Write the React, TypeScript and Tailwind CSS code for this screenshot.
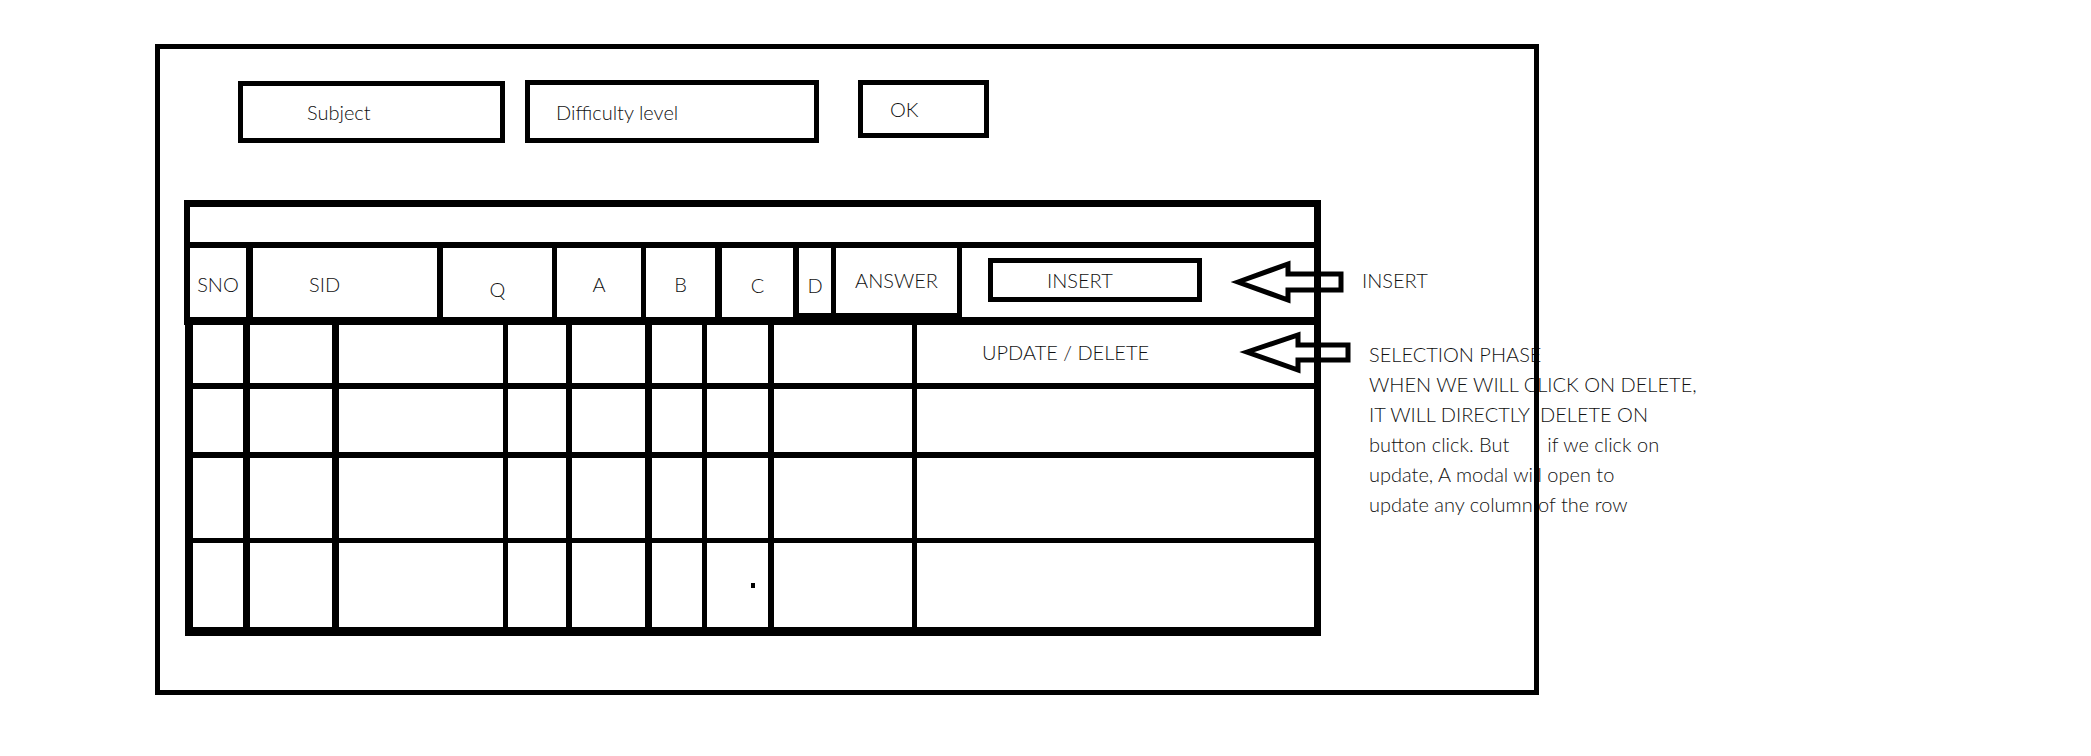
const FONT = "font-['Lato','Open_Sans',sans-serif] font-light text-[20px] leading-[24px] text-[#111]";

// header row with column labels (widths include the right-hand line)
const headCols = [
  { label: "SNO", cls: "w-[63px] border-r-[7px] justify-center pt-[24px]" },
  { label: "SID", cls: "w-[190px] border-r-[6px] justify-start pl-[56px] pt-[24px]" },
  { label: "Q", cls: "w-[114px] border-r-[5px] justify-center pt-[29px]" },
  { label: "A", cls: "w-[89px] border-r-[5px] justify-center pt-[24px]" },
  { label: "B", cls: "w-[76px] border-r-[7px] justify-center pt-[24px]" },
  { label: "C", cls: "w-[77px] border-r-[6px] justify-center pt-[25px]" },
  { label: "D", cls: "w-[37px] border-r-[5px] border-b-[4px] justify-center pt-[25px]" },
  { label: "ANSWER", cls: "w-[126px] border-r-[5px] border-b-[4px] justify-center pt-[20px]" },
];

const bodyCols = [
  "w-[57px] border-r-[7px]",
  "w-[89px] border-r-[7px]",
  "w-[169px] border-r-[5px]",
  "w-[64px] border-r-[6px]",
  "w-[80px] border-r-[7px]",
  "w-[55px] border-r-[5px]",
  "w-[67px] border-r-[6px]",
  "w-[143px] border-r-[5px]",
];

const bodyRows = [
  "h-[64px] border-b-[6px]",
  "h-[69px] border-b-[6px]",
  "h-[85px] border-b-[5px]",
  "h-[84px]",
];

const notes = [
  "SELECTION PHASE",
  "WHEN WE WILL CLICK ON DELETE,",
  "IT WILL DIRECTLY  DELETE ON",
  "button click. But       if we click on",
  "update, A modal will open to",
  "update any column of the row",
];

function Arrows() {
  return (
    <svg
      className="pointer-events-none absolute left-[1070px] top-[206px] z-20"
      width="125"
      height="125"
      viewBox="0 0 125 125"
      fill="none"
      stroke="black"
      strokeWidth="5"
      strokeLinejoin="miter"
    >
      <polygon points="8,27 58,9 58,19 111,19 111,35 58,35 58,45" />
      <polygon points="17,97 68,80 68,90 118,90 118,105 68,105 68,115" />
    </svg>
  );
}

function QuestionTable() {
  return (
    <div className="flex w-[1137px] shrink-0 flex-col">
      <div className="border-x-[6px] border-t-[7px] border-b-[8px] border-black border-r-[7px]">
        <div className="h-[41px] border-b-[6px] border-black" />
        <div className="flex h-[69px]">
          {headCols.map((c) => (
            <div key={c.label} className={`flex shrink-0 items-start border-black ${c.cls}`}>
              {c.label}
            </div>
          ))}
          <div className="min-w-0 flex-1 pl-[26px] pt-[10px]">
            <div className="h-[44px] w-[214px] border-[5px] border-black pl-[54px] pt-[5px]">INSERT</div>
          </div>
        </div>
      </div>

      <div className="ml-[1px] border-l-[8px] border-r-[7px] border-b-[9px] border-black">
        {bodyRows.map((r, ri) => (
          <div key={ri} className={`flex border-black ${r}`}>
            {bodyCols.map((c, ci) => (
              <div key={ci} className={`shrink-0 border-black ${c}`}>
                {ri === 3 && ci === 6 && <div className="ml-[44px] mt-[40px] h-[5px] w-[4px] bg-black" />}
              </div>
            ))}
            <div className="min-w-0 flex-1 pl-[65px] pt-[15px]">{ri === 0 ? "UPDATE / DELETE" : null}</div>
          </div>
        ))}
      </div>
    </div>
  );
}

export default function App() {
  return (
    <div className={`min-h-screen bg-white ${FONT}`}>
      <div className="pl-[155px] pt-[44px]">
        <div className="relative h-[651px] w-[1384px] border-[5px] border-black">
          <div className="flex items-start pl-[78px] pt-[31px]">
            <div className="mt-[1px] flex h-[62px] w-[267px] shrink-0 items-center border-[5px] border-black pl-[64px]">
              Subject
            </div>
            <div className="ml-[20px] flex h-[63px] w-[294px] shrink-0 items-center border-[5px] border-black pl-[26px]">
              Difficulty level
            </div>
            <div className="ml-[39px] flex h-[58px] w-[131px] shrink-0 items-center border-[5px] border-black pl-[27px]">
              OK
            </div>
          </div>

          <div className="mt-[57px] flex items-start pl-[24px]">
            <QuestionTable />
            <div className="ml-[41px] w-[420px] shrink-0 whitespace-pre">
              <div className="mt-[68px]">INSERT</div>
              <div className="mt-[47px] pl-[7px] leading-[30px]">
                {notes.map((n) => (
                  <div key={n}>{n}</div>
                ))}
              </div>
            </div>
          </div>

          <Arrows />
          <div className="pointer-events-none absolute -inset-[5px] z-10 border-[5px] border-black" />
        </div>
      </div>
    </div>
  );
}
